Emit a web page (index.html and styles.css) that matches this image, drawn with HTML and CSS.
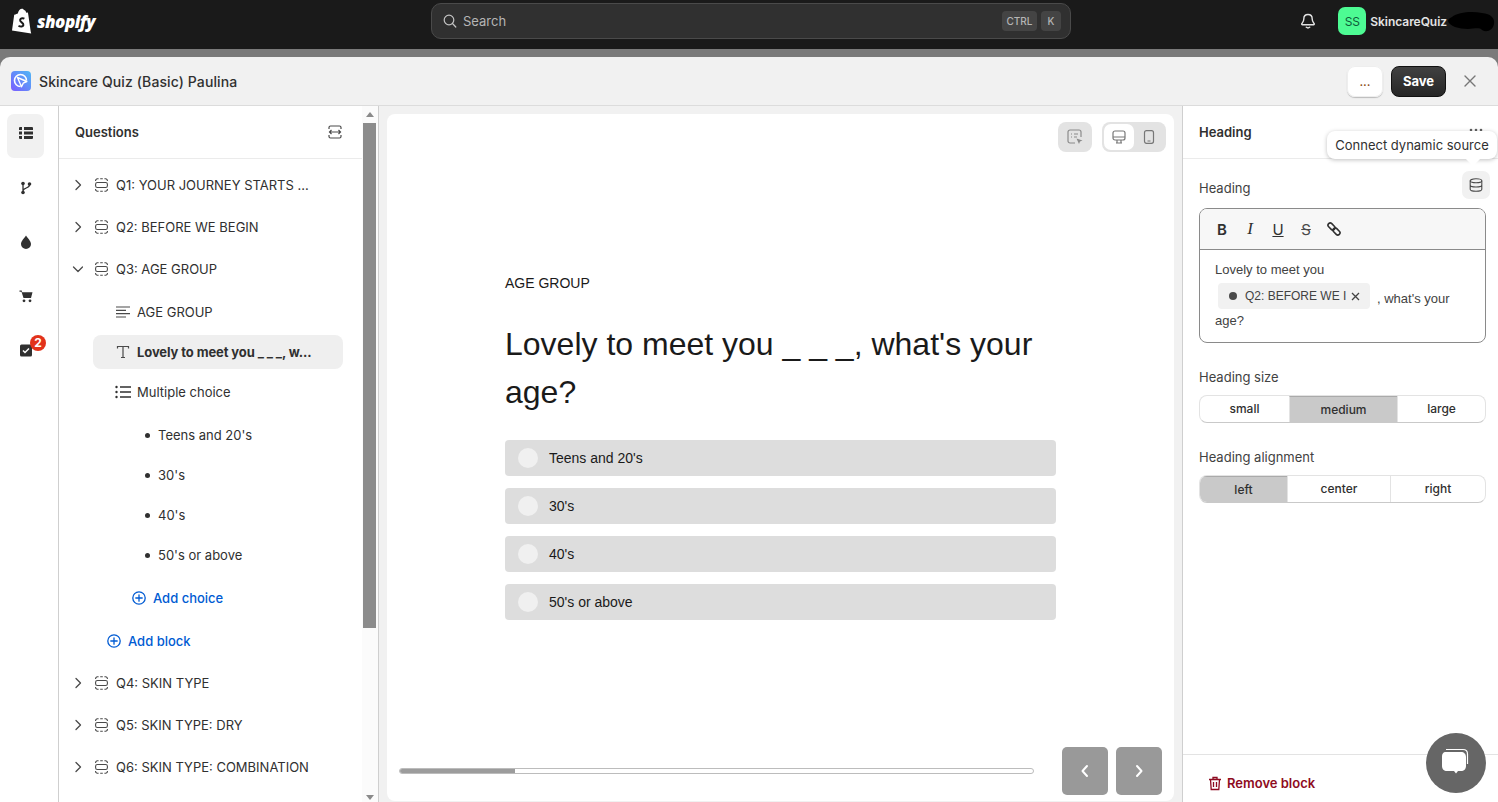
FILE: index.html
```html
<!DOCTYPE html>
<html lang="en">
<head>
    <meta charset="UTF-8">
    <meta name="viewport" content="width=device-width, initial-scale=1.0">
    <title>Skincare Quiz (Basic) Paulina</title>
    <link rel="stylesheet" href="styles.css">
</head>
<body>
    <svg class="sprite" width="0" height="0">
        <symbol id="section" viewBox="0 0 13 14">
            <rect x=".6" y="4.500" width="11.800" height="5" rx="1.800" fill="none" stroke="currentColor" stroke-width="1.100"/>
            <path d="M.6 3V2.600A1.800 1.800 0 0 1 2.400.8H3.600M5.200.8H7.800M9.400.8H10.600A1.800 1.800 0 0 1 12.400 2.600V3M.6 11V11.400A1.800 1.800 0 0 0 2.400 13.200H3.600M5.200 13.200H7.800M9.400 13.200H10.600A1.800 1.800 0 0 0 12.400 11.400V11" fill="none" stroke="currentColor" stroke-width="1.100"/>
        </symbol>
        <symbol id="chev-right" viewBox="0 0 12 12">
            <path d="M4 1.500 8.500 6 4 10.500" fill="none" stroke="currentColor" stroke-width="1.300" stroke-linecap="round" stroke-linejoin="round"/>
        </symbol>
        <symbol id="plus-circle" viewBox="0 0 14 14">
            <circle cx="7" cy="7" r="6.200" fill="none" stroke="currentColor" stroke-width="1.300"/>
            <path d="M7 3.800v6.400M3.800 7h6.400" stroke="currentColor" stroke-width="1.300" stroke-linecap="round"/>
        </symbol>
    </svg>

    <header class="topbar">
        <div class="brand">
            <svg class="brand-bag" width="22" height="26" viewBox="0 0 22 26">
                <path d="M1 22.500 3.200 6.800C5 6.200 6 5.800 6.800 5.400 7.500 2.800 9 .8 11 .8c.9 0 1.500.5 1.900 1.200 1.200 0 2 1.200 2.400 2.800l1.600-.4c.5 2 2.400 17 3.300 21.200L1 22.500Z" fill="#fff"/>
                <path d="M13.400 10.600c-.8-.4-3.900-1-4.300 1.400-.4 2.300 3.700 2.400 3.300 5-.3 1.700-2.600 2-4.900.9" fill="none" stroke="#1a1a1a" stroke-width="2"/>
            </svg>
            <span class="brand-name">shopify</span>
        </div>
        <div class="search">
            <svg width="14" height="14" viewBox="0 0 14 14"><circle cx="6" cy="6" r="4.800" fill="none" stroke="#c4c4c4" stroke-width="1.200"/><path d="m9.500 9.500 3.300 3.500" stroke="#c4c4c4" stroke-width="1.200" stroke-linecap="round"/></svg>
            <span class="search-text">Search</span>
            <span class="key key-ctrl">CTRL</span>
            <span class="key key-k">K</span>
        </div>
        <div class="account">
            <svg class="bell" width="16" height="16" viewBox="0 0 16 16"><path d="M8 1.500c-2.700 0-4.200 2-4.200 4.400 0 2.600-1.300 3.600-2 4.800-.3.500 0 1 .6 1h11.200c.6 0 .9-.5.6-1-.7-1.200-2-2.200-2-4.800C12.200 3.500 10.700 1.500 8 1.500Z" fill="none" stroke="#e3e3e3" stroke-width="1.400"/><path d="M6.300 14.300c.9.700 2.500.7 3.400 0" fill="none" stroke="#e3e3e3" stroke-width="1.400" stroke-linecap="round"/></svg>
            <span class="avatar">SS</span>
            <span class="shop-name">SkincareQuiz</span>
            <svg class="scribble" width="48" height="24" viewBox="0 0 48 24"><path d="M5 8c6-5 20-6 30-4 9 1 13 5 12 11-1 6-7 9-12 6-3-3-8-1-14-1C12 20 2 17 1 12c0-2 2-3 4-4Z" fill="#000"/></svg>
        </div>
    </header>

    <div class="strip">
        <div class="window">
            <div class="window-head">
                <svg class="app-logo" width="20" height="20" viewBox="0 0 20 20">
                    <defs><linearGradient id="logo-grad" x1="0" y1="1" x2="1" y2="0"><stop offset="0" stop-color="#7a5cff"/><stop offset="1" stop-color="#4fb8f5"/></linearGradient></defs>
                    <rect width="20" height="20" rx="4" fill="url(#logo-grad)"/>
                    <path d="M9.500 15.500A6 6 0 1 1 15.500 9.500" fill="none" stroke="#fff" stroke-width="1.600"/>
                    <path d="M6.500 6.500 15.800 10.500 12.200 12.200 10.500 15.800Z" fill="none" stroke="#fff" stroke-width="1.400" stroke-linejoin="round"/>
                </svg>
                <span class="window-title">Skincare Quiz (Basic) Paulina</span>
                <button class="btn-more">...</button>
                <button class="btn-save">Save</button>
                <svg class="window-close" width="12" height="12" viewBox="0 0 12 12"><path d="M1 1l10 10M11 1 1 11" stroke="#777" stroke-width="1.400" stroke-linecap="round"/></svg>
            </div>

            <div class="window-body">
                <nav class="rail">
                    <div class="rail-item active">
                        <svg width="14" height="12" viewBox="0 0 14 12"><path d="M0 1a1 1 0 0 1 1-1h2v3H0Zm5-1h8a1 1 0 0 1 1 1v2H5ZM0 4.500h3v3H0Zm5 0h9v3H5ZM0 9h3v3H1a1 1 0 0 1-1-1Zm5 0h9v2a1 1 0 0 1-1 1H5Z" fill="#303030"/></svg>
                    </div>
                    <div class="rail-item">
                        <svg width="12" height="14" viewBox="0 0 12 14"><circle cx="3" cy="2.500" r="1.800" fill="#303030"/><circle cx="3" cy="11.500" r="1.800" fill="#303030"/><circle cx="9.500" cy="3" r="1.800" fill="#303030"/><path d="M3 3v8M9.500 4c0 3.500-6.500 2.500-6.500 6" fill="none" stroke="#303030" stroke-width="1.300"/></svg>
                    </div>
                    <div class="rail-item">
                        <svg width="12" height="14" viewBox="0 0 12 14"><path d="M6 .5C7.500 3 11 6 11 9a5 5 0 0 1-10 0C1 6 4.500 3 6 .5Z" fill="#303030"/></svg>
                    </div>
                    <div class="rail-item">
                        <svg width="14" height="14" viewBox="0 0 14 14"><path d="M.5 1.500h2.200l.5 1.800h10.300l-1.500 5.700H4.500L2.500 2.800H.5Z" fill="#303030"/><circle cx="5" cy="11.800" r="1.400" fill="#303030"/><circle cx="11" cy="11.800" r="1.400" fill="#303030"/></svg>
                    </div>
                    <div class="rail-item">
                        <svg width="14" height="14" viewBox="0 0 14 14"><rect x="1" y="1.500" width="12" height="12" rx="1.500" fill="#303030"/><path d="M4 7.500l2 2 4-4" fill="none" stroke="#fff" stroke-width="1.500"/></svg>
                        <span class="rail-badge">2</span>
                    </div>
                </nav>

                <aside class="questions">
                    <div class="tree">
                        <div class="panel-head">
                            <span class="panel-title">Questions</span>
                            <svg width="14" height="14" viewBox="0 0 14 14"><path d="M1 4V2.500A1.500 1.500 0 0 1 2.500 1h9A1.500 1.500 0 0 1 13 2.500V4M1 10v1.500A1.500 1.500 0 0 0 2.500 13h9a1.500 1.500 0 0 0 1.500-1.500V10M1.500 7h11M3.500 5 1.500 7l2 2M10.500 5l2 2-2 2" fill="none" stroke="#4a4a4a" stroke-width="1.200"/></svg>
                        </div>
                        <ul class="tree-list">
                            <li class="row row-section"><svg class="chev"><use href="#chev-right"/></svg><svg class="sec"><use href="#section"/></svg>Q1: YOUR JOURNEY STARTS ...</li>
                            <li class="row row-section"><svg class="chev"><use href="#chev-right"/></svg><svg class="sec"><use href="#section"/></svg>Q2: BEFORE WE BEGIN</li>
                            <li class="row row-section"><svg class="chev open"><use href="#chev-right"/></svg><svg class="sec"><use href="#section"/></svg>Q3: AGE GROUP</li>
                            <li class="row row-block row-first">
                                <svg class="blk" width="16" height="14" viewBox="0 0 16 14"><path d="M1 2h14M1 5.300h10M1 8.600h14M1 12h10" stroke="#4a4a4a" stroke-width="1.200"/></svg>AGE GROUP
                            </li>
                            <li class="row row-block row-selected">
                                <svg class="blk" width="16" height="14" viewBox="0 0 16 14"><path d="M2.500 3.500V1.500h11v2M8 1.500v11M6 12.500h4" fill="none" stroke="#4a4a4a" stroke-width="1.200"/></svg>Lovely to meet you _ _ _, w...
                            </li>
                            <li class="row row-block">
                                <svg class="blk" width="16" height="14" viewBox="0 0 16 14"><path d="M5 2h11M5 7h11M5 12h11" stroke="#303030" stroke-width="1.300"/><circle cx="1.500" cy="2" r="1.200" fill="#303030"/><circle cx="1.500" cy="7" r="1.200" fill="#303030"/><circle cx="1.500" cy="12" r="1.200" fill="#303030"/></svg>Multiple choice
                            </li>
                            <li class="row row-choice">Teens and 20's</li>
                            <li class="row row-choice">30's</li>
                            <li class="row row-choice">40's</li>
                            <li class="row row-choice">50's or above</li>
                            <li class="row row-add add-choice"><svg class="plus"><use href="#plus-circle"/></svg>Add choice</li>
                            <li class="row row-add add-block"><svg class="plus"><use href="#plus-circle"/></svg>Add block</li>
                            <li class="row row-section"><svg class="chev"><use href="#chev-right"/></svg><svg class="sec"><use href="#section"/></svg>Q4: SKIN TYPE</li>
                            <li class="row row-section"><svg class="chev"><use href="#chev-right"/></svg><svg class="sec"><use href="#section"/></svg>Q5: SKIN TYPE: DRY</li>
                            <li class="row row-section"><svg class="chev"><use href="#chev-right"/></svg><svg class="sec"><use href="#section"/></svg>Q6: SKIN TYPE: COMBINATION</li>
                        </ul>
                    </div>
                    <div class="scrollbar">
                        <span class="arrow-up"></span>
                        <span class="scroll-thumb"></span>
                        <span class="arrow-down"></span>
                    </div>
                </aside>

                <main class="stage">
                    <div class="preview">
                        <div class="preview-tools">
                            <span class="tool-btn">
                                <svg width="16" height="16" viewBox="0 0 16 16"><path d="M8 14H3a2 2 0 0 1-2-2V3a2 2 0 0 1 2-2h9a2 2 0 0 1 2 2v5" fill="none" stroke="#8a8a8a" stroke-width="1.200"/><path d="M4 5h1M7 5h4M4 8h1M7 8h3" stroke="#8a8a8a" stroke-width="1.200"/><path d="M9.500 9.500l6 2-2.500 1-1 2.500Z" fill="#8a8a8a"/></svg>
                            </span>
                            <div class="device-toggle">
                                <span class="device active">
                                    <svg width="14" height="14" viewBox="0 0 14 14"><rect x="1" y="1" width="12" height="9" rx="2" fill="none" stroke="#777" stroke-width="1.200"/><path d="M1 7h12M4 13h6M5 10v3M9 10v3" stroke="#777" stroke-width="1.200"/></svg>
                                </span>
                                <span class="device">
                                    <svg width="12" height="14" viewBox="0 0 12 14"><rect x="1.500" y=".7" width="9" height="12.600" rx="2" fill="none" stroke="#777" stroke-width="1.200"/><path d="M4.500 11h3" stroke="#777" stroke-width="1.200"/></svg>
                                </span>
                            </div>
                        </div>

                        <div class="quiz">
                            <p class="quiz-kicker">AGE GROUP</p>
                            <h1 class="quiz-heading">Lovely to meet you _ _ _, what's your age?</h1>
                            <div class="option"><span class="option-dot"></span>Teens and 20's</div>
                            <div class="option"><span class="option-dot"></span>30's</div>
                            <div class="option"><span class="option-dot"></span>40's</div>
                            <div class="option"><span class="option-dot"></span>50's or above</div>
                        </div>

                        <div class="preview-foot">
                            <div class="progress"><span class="progress-fill"></span></div>
                            <button class="nav-btn"><svg width="12" height="14" viewBox="0 0 12 14"><path d="M8 2 3.500 7 8 12" fill="none" stroke="#fff" stroke-width="2" stroke-linecap="round" stroke-linejoin="round"/></svg></button>
                            <button class="nav-btn"><svg width="12" height="14" viewBox="0 0 12 14"><path d="M4 2l4.500 5L4 12" fill="none" stroke="#fff" stroke-width="2" stroke-linecap="round" stroke-linejoin="round"/></svg></button>
                        </div>
                    </div>
                </main>

                <aside class="settings">
                    <div class="panel-head settings-head">
                        <span class="panel-title">Heading</span>
                        <svg class="dots" width="14" height="4" viewBox="0 0 14 4"><circle cx="2" cy="2" r="1.300" fill="#616161"/><circle cx="7" cy="2" r="1.300" fill="#616161"/><circle cx="12" cy="2" r="1.300" fill="#616161"/></svg>
                    </div>
                    <div class="settings-body">
                        <div class="field-top">
                            <span class="field-label">Heading</span>
                            <span class="db-btn">
                                <svg width="14" height="14" viewBox="0 0 14 14"><ellipse cx="7" cy="2.800" rx="5.800" ry="2" fill="none" stroke="#4a4a4a" stroke-width="1.100"/><path d="M1.200 2.800v8.400c0 1.100 2.600 2 5.800 2s5.800-.9 5.800-2V2.800M1.200 7c0 1.100 2.600 2 5.800 2s5.800-.9 5.800-2" fill="none" stroke="#4a4a4a" stroke-width="1.100"/></svg>
                            </span>
                        </div>
                        <div class="editor">
                            <div class="editor-tools">
                                <span class="fmt fmt-b">B</span>
                                <span class="fmt fmt-i">I</span>
                                <span class="fmt fmt-u">U</span>
                                <span class="fmt fmt-s">S</span>
                                <svg width="16" height="16" viewBox="0 0 16 16"><rect x="1.500" y="3.300" width="8" height="4.400" rx="2.200" transform="rotate(45 5.500 5.500)" fill="none" stroke="#303030" stroke-width="1.600"/><rect x="6.500" y="8.300" width="8" height="4.400" rx="2.200" transform="rotate(45 10.500 10.500)" fill="none" stroke="#303030" stroke-width="1.600"/></svg>
                            </div>
                            <div class="editor-text">
                                Lovely to meet you<br>
                                <span class="chip"><span class="chip-dot"></span>Q2: BEFORE WE I<svg class="chip-x" width="9" height="9" viewBox="0 0 9 9"><path d="M1 1l7 7M8 1 1 8" stroke="#424242" stroke-width="1.300"/></svg></span> , what's your<br>
                                age?
                            </div>
                        </div>

                        <div class="field-label field-gap">Heading size</div>
                        <div class="segments">
                            <span class="seg seg-small">small</span>
                            <span class="seg seg-medium on">medium</span>
                            <span class="seg seg-large">large</span>
                        </div>

                        <div class="field-label field-gap">Heading alignment</div>
                        <div class="segments">
                            <span class="seg seg-left on">left</span>
                            <span class="seg seg-center">center</span>
                            <span class="seg seg-right">right</span>
                        </div>
                    </div>
                    <div class="settings-foot">
                        <svg width="14" height="15" viewBox="0 0 14 15"><path d="M1 3.500h12M5 3.500V1.500h4v2M2.500 3.500l.7 10h7.600l.7-10M5.500 6v5M8.500 6v5" fill="none" stroke="#8e0b21" stroke-width="1.300"/></svg>
                        <span>Remove block</span>
                    </div>
                </aside>
            </div>
        </div>
    </div>

    <div class="tooltip">Connect dynamic source</div>
    <div class="chat-bubble">
        <svg width="32" height="32" viewBox="0 0 32 32"><path d="M6 2.500h17c3 0 4.500 1.500 4.500 4.500v10" fill="none" stroke="#fff" stroke-width="1.200"/><path d="M6 5h15c3 0 5 2 5 5v9c0 3-2 5-5 5h-3l-2 2.500-2-2.500H7c-3 0-5-2-5-5v-9c0-3 1-5 4-5Z" fill="#fff"/></svg>
    </div>
</body>
</html>
```

FILE: styles.css
```css
* {
    box-sizing: border-box;
}

html, body {
    margin: 0;
    height: 802px;
    overflow: hidden;
}

body {
    font-family: Inter, "Noto Sans", sans-serif;
    font-size: 13px;
    color: #303030;
    background: #1a1a1a;
}

.sprite {
    position: absolute;
}

/* top bar */
.topbar {
    height: 49px;
    display: flex;
    align-items: center;
    background: #1a1a1a;
    padding: 0 3px 7px 11px;
}

.brand {
    width: 420px;
    display: flex;
    align-items: center;
    gap: 4px;
}

.brand-name {
    font-family: "Open Sans", sans-serif;
    font-weight: 800;
    font-style: italic;
    font-size: 17px;
    letter-spacing: -0.5px;
    color: #fff;
}

.search {
    width: 640px;
    height: 36px;
    display: flex;
    align-items: center;
    padding: 0 9px 0 11px;
    gap: 4px;
    background: #303030;
    border: 1px solid #4a4a4a;
    border-radius: 10px;
    color: #b5b5b5;
}

.search-text {
    margin-left: 2px;
    margin-right: auto;
}

.key {
    height: 20px;
    display: flex;
    align-items: center;
    justify-content: center;
    background: #444;
    border-radius: 4px;
    font-size: 10px;
    font-weight: 500;
    color: #b5b5b5;
}

.key-ctrl {
    width: 35px;
}

.key-k {
    width: 20px;
}

.account {
    margin-left: auto;
    display: flex;
    align-items: center;
}

.bell {
    margin-right: 22px;
}

.avatar {
    width: 28px;
    height: 28px;
    display: flex;
    align-items: center;
    justify-content: center;
    background: #4dfb93;
    border-radius: 7px;
    font-size: 12px;
    color: #0d5c3a;
}

.shop-name {
    margin-left: 4px;
    font-size: 12px;
    font-weight: 600;
    color: #e3e3e3;
    letter-spacing: -0.05px;
}

/* window */
.strip {
    height: 753px;
    background: #7a7a7a;
    padding-top: 8px;
}

.window {
    height: 745px;
    display: flex;
    flex-direction: column;
    background: #f1f1f1;
    border-radius: 10px 10px 0 0;
    overflow: hidden;
}

.window-head {
    height: 49px;
    flex: none;
    display: flex;
    align-items: center;
    padding: 0 22px 0 11px;
    border-bottom: 1px solid #dcdcdc;
}

.window-title {
    margin-left: 8px;
    margin-right: auto;
    font-size: 14px;
    font-weight: 500;
    letter-spacing: 0.1px;
}

.btn-more {
    width: 36px;
    height: 31px;
    margin-right: 8px;
    background: #fff;
    border: 0;
    border-radius: 8px;
    box-shadow: 0 1px 1px #bbb, inset 0 0 0 1px #eee;
    font-family: inherit;
    font-size: 13px;
    color: #8a4b14;
}

.btn-save {
    width: 55px;
    height: 31px;
    margin-right: 18px;
    background: linear-gradient(#414141, #262626);
    border: 1px solid #111;
    border-radius: 8px;
    font-family: inherit;
    font-size: 13px;
    font-weight: 700;
    color: #fff;
}

.window-body {
    flex: 1;
    min-height: 0;
    display: flex;
}

/* left rail */
.rail {
    width: 59px;
    flex: none;
    padding: 8px 14px 0 7px;
    display: flex;
    flex-direction: column;
    gap: 10px;
    background: #fff;
    border-right: 1px solid #cfcfcf;
}

.rail-item {
    position: relative;
    height: 44px;
    padding-top: 13px;
    display: flex;
    justify-content: center;
    align-items: flex-start;
    border-radius: 7px;
}

.rail-item.active {
    background: #f1f1f1;
}

.rail-badge {
    position: absolute;
    top: 5px;
    right: -2px;
    width: 16px;
    height: 16px;
    background: #e2321b;
    border-radius: 50%;
    text-align: center;
    font-size: 12px;
    line-height: 16px;
    font-weight: 700;
    color: #fff;
}

/* questions tree */
.questions {
    width: 320px;
    flex: none;
    display: flex;
    background: #fff;
    border-right: 1px solid #cfcfcf;
}

.tree {
    flex: 1;
    min-width: 0;
}

.panel-head {
    height: 53px;
    display: flex;
    align-items: center;
    justify-content: space-between;
    padding: 0 20px 0 16px;
    border-bottom: 1px solid #ebebeb;
}

.panel-title {
    font-size: 13px;
    font-weight: 600;
}

.tree-list {
    list-style: none;
    margin: 0;
    padding: 0;
}

.row {
    display: flex;
    align-items: center;
}

.row-section {
    height: 42px;
    padding-left: 13px;
}

.row-section:first-child {
    margin-top: 5px;
}

.chev {
    width: 12px;
    height: 12px;
    margin-right: 11px;
    color: #4a4a4a;
}

.chev.open {
    transform: rotate(90deg);
}

.sec {
    width: 13px;
    height: 14px;
    margin-right: 8px;
    color: #4a4a4a;
}

.row-block {
    height: 40px;
    margin: 0 19px 0 34px;
    padding-left: 22px;
    border-radius: 8px;
}

.row-first {
    height: 44px;
}

.blk {
    margin-right: 6px;
}

.row-selected {
    height: 34px;
    margin-top: 1px;
    margin-bottom: 3px;
    background: #efefef;
    font-weight: 700;
    letter-spacing: -0.1px;
}

.row-choice {
    height: 40px;
    padding-left: 86px;
}

.row-choice:before {
    content: "";
    width: 5px;
    height: 5px;
    margin-right: 8px;
    background: #303030;
    border-radius: 50%;
}

.row-block + .row-choice {
    margin-top: 3px;
}

.row-add {
    height: 43px;
    color: #005bd3;
    font-weight: 500;
}

.plus {
    width: 14px;
    height: 14px;
    margin-right: 7px;
}

.add-choice {
    padding-left: 73px;
    margin-top: 1px;
}

.add-block {
    padding-left: 48px;
}

.scrollbar {
    width: 16px;
    flex: none;
    display: flex;
    flex-direction: column;
    align-items: center;
    padding: 6px 2px 0 1px;
    background: #fbfbfb;
}

.arrow-up, .arrow-down {
    width: 0;
    height: 0;
    border-left: 4px solid transparent;
    border-right: 4px solid transparent;
}

.arrow-up {
    border-bottom: 5px solid #8a8a8a;
}

.arrow-down {
    margin-top: 167px;
    border-top: 5px solid #8a8a8a;
}

.scroll-thumb {
    width: 13px;
    height: 505px;
    margin-top: 6px;
    background: #8c8c8c;
}

/* preview */
.stage {
    flex: 1;
    min-width: 0;
    padding: 8px 8px 1px;
}

.preview {
    height: 100%;
    display: flex;
    flex-direction: column;
    background: #fff;
    border-radius: 8px;
    padding: 8px 12px 6px;
}

.preview-tools {
    display: flex;
    justify-content: flex-end;
    gap: 10px;
    margin-right: -4px;
}

.tool-btn {
    width: 34px;
    height: 30px;
    display: flex;
    align-items: center;
    justify-content: center;
    background: #e3e3e3;
    border-radius: 8px;
}

.device-toggle {
    width: 64px;
    height: 30px;
    display: flex;
    padding: 2px;
    background: #e3e3e3;
    border-radius: 8px;
}

.device {
    flex: 1;
    display: flex;
    align-items: center;
    justify-content: center;
    border-radius: 7px;
}

.device.active {
    background: #fff;
}

.quiz {
    width: 551px;
    margin-left: 106px;
    padding-top: 122px;
    font-family: "Liberation Sans", Arial, sans-serif;
}

.quiz-kicker {
    margin: 0;
    font-size: 14px;
    line-height: 18px;
    color: #1a1a1a;
}

.quiz-heading {
    margin: 28px 0 24px;
    font-size: 32px;
    font-weight: 400;
    line-height: 48px;
    color: #1a1a1a;
}

.option {
    height: 36px;
    margin-bottom: 12px;
    display: flex;
    align-items: center;
    padding-left: 13px;
    background: #dddddd;
    border-radius: 4px;
    font-size: 14px;
    color: #1a1a1a;
}

.option-dot {
    width: 20px;
    height: 20px;
    margin-right: 11px;
    background: #f0f0f0;
    border-radius: 50%;
}

.preview-foot {
    margin-top: auto;
    display: flex;
    align-items: center;
    gap: 8px;
}

.progress {
    width: 635px;
    height: 6px;
    margin-right: 20px;
    border: 1px solid #bcbcbc;
    border-radius: 3px;
    overflow: hidden;
    background: #fff;
}

.progress-fill {
    display: block;
    width: 115px;
    height: 100%;
    background: #9c9c9c;
}

.nav-btn {
    width: 46px;
    height: 48px;
    display: flex;
    align-items: center;
    justify-content: center;
    background: #999;
    border: 0;
    border-radius: 5px;
}

/* settings panel */
.settings {
    width: 316px;
    flex: none;
    display: flex;
    flex-direction: column;
    background: #fff;
    border-left: 1px solid #cfcfcf;
}

.settings-head {
    padding: 0 15px 0 16px;
    flex: none;
}

.dots {
    margin-bottom: 4px;
}

.settings-body {
    flex: 1;
    padding: 12px 12px 0 16px;
}

.field-top {
    display: flex;
    align-items: center;
    justify-content: space-between;
    margin-right: -4px;
    height: 28px;
    margin-bottom: 9px;
}

.field-label {
    font-size: 13px;
    color: #424242;
}

.field-top .field-label {
    padding-top: 6px;
}

.db-btn {
    width: 28px;
    height: 28px;
    display: flex;
    align-items: center;
    justify-content: center;
    background: #f1f1f1;
    border-radius: 7px;
}

.editor {
    height: 135px;
    border: 1px solid #8a8a8a;
    border-radius: 8px;
    overflow: hidden;
}

.editor-tools {
    height: 41px;
    display: flex;
    align-items: center;
    gap: 12px;
    padding-left: 14px;
    background: #f7f7f7;
    border-bottom: 1px solid #8a8a8a;
}

.fmt {
    width: 16px;
    text-align: center;
    font-size: 15px;
    color: #303030;
}

.fmt-b {
    font-weight: 600;
}

.fmt-i {
    font-style: italic;
    font-family: "Liberation Serif", serif;
    font-size: 17px;
}

.fmt-u {
    text-decoration: underline;
}

.fmt-s {
    text-decoration: line-through;
    color: #4a4a4a;
}

.editor-text {
    padding: 9px 15px 0;
    font-family: "Liberation Sans", Arial, sans-serif;
    font-size: 13px;
    line-height: 22px;
    color: #424242;
}

.chip {
    display: inline-flex;
    align-items: center;
    height: 26px;
    margin: 2px 3px -1px;
    padding: 0 10px 0 11px;
    background: #f1f1f1;
    border-radius: 4px;
    font-size: 12px;
    line-height: 20px;
    vertical-align: 3px;
}

.chip-dot {
    width: 8px;
    height: 8px;
    margin-right: 8px;
    background: #4a4a4a;
    border-radius: 50%;
}

.chip-x {
    margin-left: 5px;
}

.field-gap {
    margin-top: 25px;
    margin-bottom: 9px;
    line-height: 18px;
}

.segments {
    height: 28px;
    display: flex;
    background: #fff;
    border: 1px solid #e3e3e3;
    border-bottom-color: #c9c9c9;
    border-radius: 8px;
    overflow: hidden;
}

.seg {
    display: flex;
    align-items: center;
    justify-content: center;
    padding-bottom: 1px;
    font-size: 12px;
    font-weight: 500;
    color: #303030;
    border-left: 1px solid #e3e3e3;
}

.seg:first-child {
    border-left: 0;
}

.seg.on {
    background: #c9c9c9;
    border-top: 1px solid #aaa;
}

.seg-small { width: 89px; }
.seg-medium { width: 108px; }
.seg-large { flex: 1; }
.seg-left { width: 87px; }
.seg-center { width: 103px; }
.seg-right { flex: 1; }

.settings-foot {
    height: 48px;
    flex: none;
    display: flex;
    align-items: center;
    gap: 5px;
    padding: 9px 0 0 25px;
    border-top: 1px solid #e3e3e3;
    color: #8e0b21;
    font-weight: 600;
}

/* things sitting over the page */
.tooltip {
    position: absolute;
    left: 1327px;
    top: 131px;
    width: 170px;
    height: 28px;
    text-align: center;
    line-height: 28px;
    background: #fff;
    border-radius: 8px;
    box-shadow: 0 1px 4px rgba(0, 0, 0, 0.25);
    color: #303030;
    font-size: 13px;
}

.tooltip:after {
    content: "";
    position: absolute;
    left: 141px;
    bottom: -5px;
    width: 10px;
    height: 10px;
    background: #fff;
    transform: rotate(45deg);
}

.chat-bubble {
    position: absolute;
    left: 1426px;
    top: 733px;
    width: 60px;
    height: 60px;
    display: flex;
    align-items: center;
    justify-content: center;
    background: #666;
    border-radius: 50%;
}
```
